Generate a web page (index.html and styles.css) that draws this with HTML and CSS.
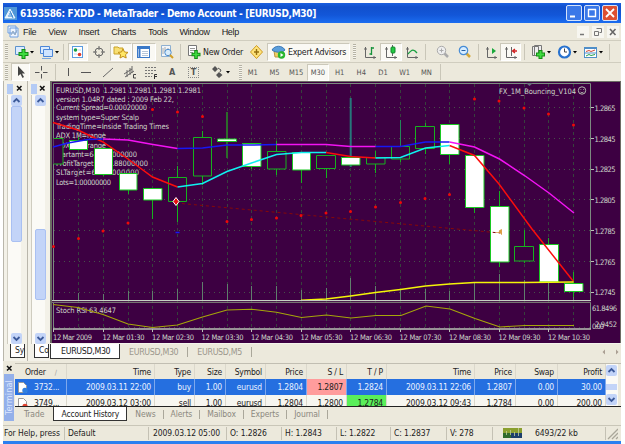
FILE: index.html
```
<!DOCTYPE html>
<html lang="en">
  <head>
    <meta charset="UTF-8">
    <title>MetaTrader</title>
    <link rel="stylesheet" href="styles.css">
  </head>
  <body>
    <div class="window">
      <div class="titlebar">
        <svg class="logo" width="13" height="13" viewBox="0 0 13 13"><rect width="13" height="13" fill="#4f97d8"/><path d="M1 11L6 2l5 9zM3.500 11L8 4" fill="#dff0ff" stroke="#fff" stroke-width=".8"/><path d="M4 9h5M5 7h3M6 4l3 7" stroke="#3b86cf"/></svg>
        <span class="title">6193586: FXDD - MetaTrader - Demo Account - [EURUSD,M30]</span>
        <span class="win_btn"><svg width="14" height="14"><path d="M3 10.500h5" stroke="#fff" stroke-width="2"/></svg></span>
        <span class="win_btn"><svg width="14" height="14"><path d="M3 3.500h8M3.500 3v7.500h7V3" fill="none" stroke="#fff" stroke-width="1.400"/></svg></span>
        <span class="win_btn close"><svg width="14" height="14"><path d="M3 3l8 8M11 3l-8 8" stroke="#fff" stroke-width="1.800"/></svg></span>
      </div>

      <div class="menubar">
        <svg width="13" height="13" viewBox="0 0 13 13"><path d="M1 1h8v7H1zM3 3h8v9H3z" fill="#eef5ff" stroke="#6f9fe0"/><path d="M4 10l2-4 2 4 2-5" fill="none" stroke="#90a8c0"/></svg>
        <span>File</span><span>View</span><span>Insert</span><span>Charts</span><span>Tools</span><span>Window</span><span>Help</span>
        <div class="mdi">
          <svg width="12" height="12"><path d="M3 8.500h4" stroke="#777" stroke-width="1.500"/></svg>
          <svg width="12" height="12"><path d="M4.500 2.500h5v4h-2M2.500 5.500h4v4h-4z" fill="none" stroke="#777"/></svg>
          <svg width="12" height="12"><path d="M3 3l5.500 6M8.500 3L3 9" stroke="#666" stroke-width="1.600"/></svg>
        </div>
      </div>

      <div class="toolbar main_tools">
        <i class="grip"></i>
        <span class="tool"><svg width="21" height="16"><path d="M1.500 2.500h9v8h-9z" fill="#dcecff" stroke="#5c92cc"/><path d="M9.500 5v10M4.500 10h10" stroke="#148c14" stroke-width="4"/><path d="M9.500 6v8M5.500 10h8" stroke="#3fdc3f" stroke-width="2"/><path d="M16 7h4l-2 2.500z"/></svg></span>
        <span class="tool"><svg width="21" height="16"><path d="M1.500 2.500h9v7h-9z" fill="#dcecff" stroke="#4d87d8"/><path d="M4.500 5.500h9v7h-9z" fill="#cfe4ff" stroke="#4d87d8"/><path d="M3 14.500h9" stroke="#7ba6dc"/><path d="M16 7h4l-2 2.500z"/></svg></span>
        <i class="sep"></i>
        <span class="tool on"><svg width="14" height="16"><rect x="1.500" y="2.500" width="10" height="11" fill="#fff" stroke="#5a9be0"/><circle cx="4.500" cy="6" r="1.800" fill="#18a040"/><circle cx="8.500" cy="10.500" r="1.800" fill="#e03828"/><path d="M7 6h3M3 10h3" stroke="#b8d4f0"/></svg></span>
        <span class="tool"><svg width="14" height="16"><circle cx="7" cy="8" r="4" fill="none" stroke="#666"/><path d="M7 2v4M7 10v4M1 8h4M9 8h4" stroke="#666"/></svg></span>
        <span class="tool on"><svg width="16" height="16"><path d="M1 3h4l1 1h4v6H1z" fill="#f8df72" stroke="#c9a227"/><path d="M10 5l1.500 3 3.500.4-2.500 2.300.7 3.300-3.200-1.600L7 14l.6-3.300L5 8.400 8.500 8z" fill="#ffe766" stroke="#c28f16"/></svg></span>
        <span class="tool on"><svg width="16" height="16"><rect x="1.500" y="2.500" width="12" height="11" fill="#fff" stroke="#3a79c8"/><path d="M2 4h12M3.500 4v9" stroke="#3a79c8" stroke-width="2"/><path d="M6 7.500h6M6 9.500h6M6 11.500h6" stroke="#b5c5d8"/></svg></span>
        <span class="tool"><svg width="16" height="16"><path d="M2.500 1.500h9v11h-9z" fill="#f2f6fa" stroke="#8fb0d0"/><path d="M4 4v6M6 3v5M9 4v4" stroke="#aaa"/><circle cx="9" cy="8.500" r="3.200" fill="#d8ecfa" stroke="#4c8cd0"/><path d="M11 11l3 3" stroke="#d2a028" stroke-width="2"/></svg></span>
        <i class="sep"></i>
        <span class="tool wide"><svg width="15" height="16"><path d="M1.500 1.500h8v10h-8z" fill="#fff" stroke="#777"/><path d="M3 4.500h5M3 6.500h5M3 8.500h3" stroke="#999"/><path d="M9 6v9M4.500 10.500h9" stroke="#148c14" stroke-width="3.600"/><path d="M9 7v7M5.500 10.500h7" stroke="#3fdc3f" stroke-width="1.600"/></svg><b>New Order</b></span>
        <span class="tool"><svg width="15" height="16"><path d="M7.500 1.500l6 6.500-6 6.500L1.500 8z" fill="#ffe47c" stroke="#cf9b20"/><path d="M7.500 5v6M5 8h5" stroke="#96700f" stroke-width="1.400"/></svg></span>
        <span class="tool on wide"><svg width="16" height="16"><path d="M3 7h9l-1 6H4z" fill="#f0cf63" stroke="#b9953d"/><path d="M1 6c3-5 10-5 13 0-3 3-9 3-13 0z" fill="#5b9edb" stroke="#3a78b6"/><circle cx="10.500" cy="11" r="3.700" fill="#29b62d"/><path d="M9.500 9v4l3-2z" fill="#fff"/></svg><b>Expert Advisors</b></span>
        <i class="grip"></i>
        <span class="tool"><svg width="16" height="16"><path d="M3.500 3v10.500H14M2 5h3M12 12v3" fill="none" stroke="#666"/><path d="M9.500 3v8M9.500 4h2.500M7.500 10h2" stroke="#18933c" stroke-width="1.300"/></svg></span>
        <span class="tool on"><svg width="16" height="16"><path d="M3.500 3v10.500H14M2 5h3M12 12v3M9.500 1v11" fill="none" stroke="#666"/><rect x="8" y="3" width="4" height="6" rx="1" fill="#23c943" stroke="#11862a"/></svg></span>
        <span class="tool"><svg width="16" height="16"><path d="M3.500 3v10.500H14M2 5h3M12 12v3" fill="none" stroke="#666"/><path d="M4 10c4-5 6-5 9-1" fill="none" stroke="#18a040" stroke-width="1.300"/></svg></span>
        <i class="sep"></i>
        <span class="tool"><svg width="16" height="16"><path d="M9 9l4 4" stroke="#aaa" stroke-width="2.500"/><circle cx="6.500" cy="6.500" r="4.200" fill="#eee" stroke="#aaa"/><path d="M4.500 6.500h4M6.500 4.500v4" stroke="#aaa"/></svg></span>
        <span class="tool"><svg width="16" height="16"><path d="M9 9l4 4" stroke="#d5a837" stroke-width="2.500"/><circle cx="6.500" cy="6.500" r="4.200" fill="#d7edff" stroke="#478cd5" stroke-width="1.200"/><path d="M4.500 6.500h4" stroke="#2862a4"/></svg></span>
        <i class="sep"></i>
        <span class="tool"><svg width="16" height="16"><path d="M4.500 3v10.500H14M3 5h3M12 12v3" fill="none" stroke="#666"/><path d="M9 4v6l4-3z" fill="#18a83a"/></svg></span>
        <span class="tool on"><svg width="16" height="16"><path d="M3.500 3v10.500H14M2 5h3M12 12v3M8.500 3v9" fill="none" stroke="#666"/><path d="M14 7h-4M12 5l-2.500 2 2.500 2" fill="none" stroke="#d02020" stroke-width="1.300"/></svg></span>
        <i class="sep"></i>
        <span class="tool"><svg width="21" height="16"><path d="M1.500 2.500h6v9h-6zM3.500 1.500h7v10h-7z" fill="#eee" stroke="#777"/><path d="M9.500 6v9M5 10.500h9" stroke="#148c14" stroke-width="4"/><path d="M9.500 7v7M6 10.500h7" stroke="#3fdc3f" stroke-width="2"/><path d="M16 7h4l-2 2.500z"/></svg></span>
        <span class="tool"><svg width="21" height="16"><circle cx="7.500" cy="8" r="5.500" fill="#fff" stroke="#2872cf" stroke-width="2.200"/><path d="M7.500 4.500V8H10" fill="none" stroke="#444"/><path d="M16 7h4l-2 2.500z"/></svg></span>
        <span class="tool"><svg width="21" height="16"><rect x="1.500" y="3.500" width="12" height="10" fill="#fff" stroke="#508fc8"/><path d="M1 4.500h13M1 9h13" stroke="#508fc8"/><path d="M3 7.500l3-1 2 1 4-1.500" fill="none" stroke="#d14a38"/><path d="M3 12l3-1.500 2 1 4-1" fill="none" stroke="#24a04a"/><path d="M16 7h4l-2 2.500z"/></svg></span>
        <i class="sep"></i>
      </div>

      <div class="toolbar line_tools">
        <i class="grip"></i>
        <span class="tool on"><svg width="14" height="14"><path d="M4 1v10l2.500-2 2 4 1.500-1-2-3.500h3z" fill="#444"/></svg></span>
        <span class="tool"><svg width="14" height="14"><path d="M7.500 1v4.500M7.500 9v4.500M1 7.500h4.500M9 7.500h4.500" stroke="#555"/></svg></span>
        <i class="sep"></i>
        <span class="tool"><svg width="14" height="14"><path d="M7.500 3v8" stroke="#555"/></svg></span>
        <span class="tool"><svg width="14" height="14"><path d="M2 7.500h10" stroke="#555"/></svg></span>
        <span class="tool"><svg width="14" height="14"><path d="M2 12L12 3" stroke="#666"/></svg></span>
        <span class="tool"><svg width="14" height="14"><path d="M1 9l8-5M2 12l9-6M4 12V5M7 10V3M9 8V1" stroke="#666"/><path d="M13 9.500h-2.500v3.500H13" fill="none" stroke="#444"/></svg></span>
        <span class="tool"><svg width="14" height="14"><path d="M1 2.500h11M1 5.500h11M1 8.500h8M1 11.500h7" stroke="#777" stroke-dasharray="2 1"/><path d="M10.500 14V9.500H13M10.500 11.500H13" fill="none" stroke="#333"/></svg></span>
        <span class="tool letter">A</span>
        <span class="tool letter"><em>T</em></span>
        <span class="tool"><svg width="20" height="14"><path d="M4 1l3 3-3 3-3-3zM8 7l3.500 3L8 13 5 10z" fill="#555"/><path d="M7 3l3 2-1 2" fill="none" stroke="#555"/><path d="M15 6h4l-2 2.500z"/></svg></span>
        <i class="grip"></i>
        <div class="periods">
          <span>M1</span><span>M5</span><span>M15</span><span class="on">M30</span><span>H1</span><span>H4</span><span>D1</span><span>W1</span><span>MN</span>
        </div>
        <i class="sep"></i>
      </div>

      <div class="work">
        <div class="panel">
          <div class="panel_head"><i></i><svg width="7" height="7"><path d="M1 1l4.500 4.500M5.500 1L1 5.500" stroke="#111" stroke-width="1.500"/></svg></div>
          <div class="scroll">
            <span class="arrow"><svg width="11" height="11"><path d="M2.500 7l3-3 3 3" fill="none" stroke="#3c5a9a" stroke-width="1.800"/></svg></span>
            <span class="thumb tall"></span>
            <span class="arrow down"><svg width="11" height="11"><path d="M2.500 4l3 3 3-3" fill="none" stroke="#3c5a9a" stroke-width="1.800"/></svg></span>
          </div>
          <div class="panel_tab">Sy</div>
        </div>
        <div class="panel">
          <div class="panel_head"><i></i><svg width="7" height="7"><path d="M1 1l4.500 4.500M5.500 1L1 5.500" stroke="#111" stroke-width="1.500"/></svg></div>
          <div class="scroll">
            <span class="arrow"><svg width="11" height="11"><path d="M2.500 7l3-3 3 3" fill="none" stroke="#3c5a9a" stroke-width="1.800"/></svg></span>
            <span class="thumb low"></span>
            <span class="arrow down"><svg width="11" height="11"><path d="M2.500 4l3 3 3-3" fill="none" stroke="#3c5a9a" stroke-width="1.800"/></svg></span>
          </div>
          <div class="panel_tab">Co</div>
        </div>

        <div class="chart_area">
          <svg class="chart" width="571" height="263" viewBox="50 81 571 263">
            <rect x="50" y="81" width="571" height="263" fill="#f4f3ec"/>
            <rect x="50" y="81" width="571" height="262" fill="#6c6c64"/>
            <rect x="52" y="82" width="568" height="261" fill="#3d0042"/>
            <!-- grid -->
            <path class="grid_v" d="M78.500 84V329M103.500 84V329M128.500 84V329M152.500 84V329M177.500 84V329M202.500 84V329M227.500 84V329M251.500 84V329M276.500 84V329M301.500 84V329M326.500 84V329M350.500 84V329M375.500 84V329M400.500 84V329M425.500 84V329M449.500 84V329M474.500 84V329M499.500 84V329M524.500 84V329M548.500 84V329M573.500 84V329"/>
            <path class="grid_h" d="M54 107.500H590M54 138.500H590M54 169.500H590M54 199.500H590M54 230.500H590M54 261.500H590M54 292.500H590M54 327.500H590"/>
            <path class="frame" d="M53.500 301V83.500H590.500V301M53.500 303V329M590.500 303V329"/>
            <g class="label">
              <text x="56" y="93.200" textLength="145">EURUSD,M30&#160; 1.2981 1.2981 1.2981 1.2981</text>
              <text x="56" y="101.500" textLength="118">version 1.04R7 dated : 2009 Feb 22,</text>
              <text x="56" y="110.300" textLength="91">Current Spread=0.00020000</text>
              <text x="56" y="119.500" textLength="83">system type=Super Scalp</text>
              <text x="56" y="128.800" textLength="113">TradingTime=Inside Trading Times</text>
              <text x="56" y="138.200" textLength="50">ADX 1M=range</text>
              <text x="56" y="147.500" textLength="50">ADX 1M=range</text>
              <text x="56" y="156.700" textLength="81">startamt=6400.0000000</text>
              <text x="56" y="166" textLength="92">ProfitTarget=640.88000000</text>
              <text x="56" y="175.300" textLength="83">SLTarget=640.0000000</text>
              <text x="56" y="184.500" textLength="55">Lots=1.00000000</text>
              <text x="499" y="93.500" textLength="77">FX_1M_Bouncing_V104</text>
              <text x="56" y="312.500" textLength="60">Stoch RSI 63.4647</text>
            </g>
            <circle cx="582" cy="90.500" r="3.700" fill="none" stroke="#b5beb0"/>
            <path d="M580.500 89.500h.8M583 89.500h.8M580.500 92q1.500 1.500 3 0" fill="none" stroke="#b5beb0" stroke-width=".8"/>
            <path d="M526 83h7l-3.500 3z" fill="#68707a"/>
            <!-- volumes -->
            <path class="volume" d="M78.500 301v-8M103.500 301v-7M128.500 301v-10M152.500 301v-10M177.500 301v-12M202.500 301v-19M227.500 301v-17M251.500 301v-15M276.500 301v-15M301.500 301v-11M326.500 301v-13M350.500 301v-23M375.500 301v-15M400.500 301v-12M425.500 301v-12M449.500 301v-10M474.500 301v-19M499.500 301v-27M524.500 301v-21M548.500 301v-19M573.500 301v-29"/>
            <!-- candles -->
            <path class="wick" d="M78.500 137v13M103.500 148v28M128.500 173v21M152.500 188v31M177.500 166v11M177.500 202v20M202.500 131v6M202.500 176v9M251.500 143v26M276.500 141v10M276.500 169v6M301.500 152v31M326.500 169v9M375.500 151v6M375.500 164v9M400.500 159v3M425.500 123v3M425.500 149v5M449.500 155v9M474.500 208v5M499.500 191v15M499.500 262v5M524.500 230v16M524.500 261v2M548.500 238v6M573.500 272v11M573.500 291v6"/>
            <path d="M227 112v46" stroke="#2d6c2b" stroke-width="2"/>
            <path d="M350.700 98v69" stroke="#26777a" stroke-width="2"/>
            <path d="M400.500 120v26" stroke="#228658"/>
            <path class="hollow" d="M53.500 138.500h9.500v25.500h-9.500M168.500 177.500h18v24h-18zM193.500 137.500h18v38.500h-18zM267.500 151.500h18.500v17.500h-18.500zM316.500 155.500h19v13h-19zM366.500 157.500h18.500v6.500h-18.500zM391.500 146.500h18v12.500h-18zM415.500 126.500h19v22h-19zM514.500 246.500h19v14.500h-19z"/>
            <path class="full" d="M69.500 140.500h18v9h-18zM94.500 148.500h18v26h-18zM119.500 173.500h17.500v16.500h-17.500zM143.500 188.500h18.500v11.500h-18.500zM217.500 139h19v2.500h-19zM242.500 143.500h18.500v23h-18.500zM292.500 152.500h18v17.500h-18zM341.500 157.500h18.500v7.500h-18.500zM440.500 124.500h18.500v30h-18.500zM465.500 155.500h18.500v52h-18.500zM490.500 206.500h18.500v55.500h-18.500zM539.500 244.500h19v37.500h-19zM564.500 283.500h18.500v8h-18.500z"/>
            <!-- moving averages -->
            <g class="ma">
              <path d="M53 122.500L78 130l25 12 25 17 24.500 18 25 10M326 152.500l24.500 4 25 1.500M449.500 145.500l25 10L499 184l33 45 41.500 52.500" stroke="#fb0d0d"/>
              <path d="M177.500 187l25-3.500 24.500-12 24.500-8.500 25-8.500 25-2 24.500 0M375.500 158l25-.5 25-9.500 24-2.500" stroke="#0ff0f0" stroke-width="1.900"/>
              <path d="M53 147l15-4 20-3.500 15-.5M177.500 148.500l25-.5 24.500-3 24.500 0 25-.5M375.500 146.500h25l25-4.500h24" stroke="#1717f5"/>
              <path d="M103 139l25 1 25 4.500 24.500 4M276.500 144.500h49.500l24.500 2h25M449.500 142l25 5 25 12 25 16.500 24.500 17.500 25 20" stroke="#f313f3"/>
              <path d="M301 300.300l25-1.300 24.500-3 25-3.500 25-3 25-3.500 24-2 25-1.500H524l49.500-.5" stroke="#f4f408" stroke-width="1.800"/>
            </g>
            <path d="M176 203L500 233" stroke="#860808" stroke-dasharray="3 3"/>
            <path d="M173 201.500l3-4 3 4-3 4z" fill="#e81010" stroke="#fff"/>
            <path d="M496 232.500h4M499 231l2.500-1.500v5z" fill="#dfa038" stroke="#d58b2b" stroke-width=".7"/>
            <path d="M175.500 232.500h4" stroke="#1717f5" stroke-width="1.500"/>
            <path class="sar" d="M53.500 246.500h0M78.500 238.500h0M103 231h0M128 223h0M152.500 109.500h0M177.500 112h0M202.500 116.500h0M227 221.500h0M251.500 219.500h0M276.500 218h0M301 215.500h0M326 213h0M350.500 211.500h0M375.500 207h0M400.500 202.500h0M425 198.500h0M449.500 194.500h0M474.500 99h0M499 101h0M524 108h0M548.500 114h0M573.500 125h0"/>
            <path d="M52 300.500H591" stroke="#c7cfc4"/>
            <path d="M52 302.300H591" stroke="#85907f"/>
            <path d="M53 329H591" stroke="#b9c1b6" stroke-width="1.500"/>
            <path d="M53 304.500l25 3 25 7 25 9.500 24.500 3.500 25-2.500 25-8 24.500-7 24.500-.8 25 3 25 5.300 25-2.500 24.500 3 25-2.500h25l25-9.500 24 3 25 9.500 25 8.500 25-1.500h49" fill="none" stroke="#a6a60a" stroke-width="1.100"/>
            <!-- scales -->
            <path d="M591 107.500h3M591 138.500h3M591 169.500h3M591 199.500h3M591 230.500h3M591 261.500h3M591 292.500h3M53.500 329v3M103.500 329v3M152.500 329v3M202.500 329v3M251.500 329v3M301.500 329v3M350.500 329v3M400.500 329v3M449.500 329v3M499.500 329v3M548.500 329v3" stroke="#b9c1b6"/>
            <g class="label">
              <text x="594.500" y="110.500" textLength="21">1.2865</text>
              <text x="594.500" y="141.500" textLength="21">1.2845</text>
              <text x="594.500" y="172.300" textLength="21">1.2825</text>
              <text x="594.500" y="202.800" textLength="21">1.2805</text>
              <text x="594.500" y="233.500" textLength="21">1.2785</text>
              <text x="594.500" y="264.500" textLength="21">1.2765</text>
              <text x="594.500" y="295.300" textLength="21">1.2745</text>
              <text x="592" y="310.500" textLength="25">61.8496</text>
              <text x="592" y="329" textLength="12">0.00</text>
              <text x="595" y="327" textLength="22">2.9452</text>
              <text x="53" y="339.500" textLength="39">12 Mar 2009</text>
              <text x="102.500" y="339.500" textLength="42">12 Mar 01:30</text>
              <text x="152" y="339.500" textLength="42">12 Mar 02:30</text>
              <text x="201.500" y="339.500" textLength="42">12 Mar 03:30</text>
              <text x="251" y="339.500" textLength="42">12 Mar 04:30</text>
              <text x="300.500" y="339.500" textLength="42">12 Mar 05:30</text>
              <text x="350" y="339.500" textLength="42">12 Mar 06:30</text>
              <text x="399.500" y="339.500" textLength="42">12 Mar 07:30</text>
              <text x="449" y="339.500" textLength="42">12 Mar 08:30</text>
              <text x="498.500" y="339.500" textLength="42">12 Mar 09:30</text>
              <text x="548" y="339.500" textLength="42">12 Mar 10:30</text>
            </g>
          </svg>
          <div class="chart_tabs">
            <span class="active">EURUSD,M30</span><span>EURUSD,M30</span><span>EURUSD,M5</span>
            <svg width="22" height="8"><path d="M6 1.500v5L3.500 4zM17 1.500v5L19.500 4z" fill="#aa9f93"/></svg>
          </div>
        </div>
      </div>

      <div class="terminal">
        <div class="terminal_side">
          <svg width="7" height="7"><path d="M1 1l4.500 4.500M5.500 1L1 5.500" stroke="#111" stroke-width="1.500"/></svg>
          <span>Terminal</span>
        </div>
        <div class="terminal_body">
          <div class="list">
            <div class="rows">
              <div class="row head"><span>Order <small>∕</small></span><span>Time</span><span>Type</span><span>Size</span><span>Symbol</span><span>Price</span><span>S / L</span><span>T / P</span><span>Time</span><span>Price</span><span>Swap</span><span>Profit</span></div>
              <div class="row selected"><span><svg width="13" height="13"><path d="M2.500 1.500h5l3 3v7h-8z" fill="#fff" stroke="#999"/><circle cx="9" cy="9.500" r="2.700" fill="#2f7fe0"/></svg>3732...</span><span>2009.03.11 22:00</span><span>buy</span><span>1.00</span><span>eurusd</span><span>1.2804</span><span class="sl">1.2807</span><span>1.2824</span><span>2009.03.11 22:06</span><span>1.2807</span><span>0.00</span><span>30.00</span></div>
              <div class="row"><span><svg width="13" height="13"><path d="M2.500 1.500h5l3 3v7h-8z" fill="#fff" stroke="#999"/><circle cx="9" cy="9.500" r="2.700" fill="#e0432f"/></svg>3749...</span><span>2009.03.12 03:00</span><span>sell</span><span>1.00</span><span>eurusd</span><span>1.2804</span><span>1.2800</span><span class="tp">1.2784</span><span>2009.03.12 09:43</span><span>1.2784</span><span>0.00</span><span>200.00</span></div>
            </div>
            <div class="list_scroll">
              <span class="arrow"><svg width="11" height="11"><path d="M2.500 7l3-3 3 3" fill="none" stroke="#3c5a9a" stroke-width="1.800"/></svg></span>
              <span class="nub"></span>
              <span class="arrow down"><svg width="11" height="11"><path d="M2.500 4l3 3 3-3" fill="none" stroke="#3c5a9a" stroke-width="1.800"/></svg></span>
            </div>
          </div>
          <div class="terminal_tabs">
            <span>Trade</span><span class="active">Account History</span><span>News</span><span>Alerts</span><span>Mailbox</span><span>Experts</span><span>Journal</span>
          </div>
        </div>
      </div>

      <div class="statusbar">
        <span>For Help, press</span><span>Default</span><span class="date">2009.03.12 05:00</span><span>O: 1.2826</span><span>H: 1.2843</span><span>L: 1.2822</span><span>C: 1.2837</span><span>V: 278</span>
        <span class="traffic"><svg width="19" height="11"><path d="M0 0h19v5H0z" fill="#8a9f2e"/><path d="M0 5h8v5H0z" fill="#2f6a2c"/><path d="M8 5h11v5H8z" fill="#1d3f6c"/><path d="M3.500 3v4M7.500 2v5M11.500 4v4M15.500 0v8" stroke="#c3cf9c" stroke-width=".8"/></svg></span>
        <span class="kb">6493/22 kb</span>
        <svg class="resize" width="12" height="13"><path d="M2 12L12 2M6 12l6-6M10 12l2-2" stroke="#aaa79a" stroke-width="1.300"/></svg>
      </div>
      <div class="taskbar"></div>
    </div>
  </body>
</html>
```
FILE: styles.css
```
* {
  box-sizing: border-box;
}

body {
  margin: 0;
  background: #fff;
  overflow: hidden;
}

.window {
  width: 618px;
  height: 441px;
  margin: 3px 0 0 3px;
  background: #ece9dc;
  color: #1c1c1c;
  font-family: "DejaVu Sans Condensed", "DejaVu Sans", sans-serif;
  font-stretch: condensed;
  font-size: 8.5px;
  letter-spacing: -0.2px;
  white-space: nowrap;
}

svg {
  display: block;
  flex: none;
}

/* title */
.titlebar {
  display: flex;
  align-items: center;
  height: 20px;
  padding: 0 3px 0 1px;
  gap: 2px;
  background: linear-gradient(#1a5fe0, #1150cd 20%, #1256d8 60%, #1b6df0);
}

.title {
  flex: 1;
  margin-left: 1px;
  color: #fff;
  font-weight: bold;
  font-size: 10px;
  letter-spacing: -0.33px;
}

.win_btn {
  width: 16px;
  height: 16px;
  border: 1px solid #d5e3fb;
  border-radius: 2px;
  background: #3a78e8;
}

.win_btn.close {
  background: #dd5032;
}

/* menu */
.menubar {
  display: flex;
  align-items: center;
  height: 17px;
  padding-left: 4px;
  font-family: "Liberation Sans", sans-serif;
  font-size: 9px;
  letter-spacing: -0.3px;
}

.menubar span {
  margin-right: 12px;
}

.menubar svg + span {
  margin-left: 3px;
}

.mdi {
  display: flex;
  gap: 3px;
  margin: 0 2px 0 auto;
}

.mdi svg {
  background: #f7f6f0;
}

/* toolbars */
.toolbar {
  display: grid;
  align-items: center;
  border-top: 1px solid #d0cdbf;
}

.main_tools {
  height: 22px;
  grid-template-columns: 8px 27px 22px 8px 20px 22px 22px 24px 21px 9px 58px 21px 84px 9px 20px 22px 20px 9px 23px 21px 7px 18px 21px 7px 26px 26px 26px 4px;
  justify-content: start;
}

.line_tools {
  height: 19px;
  grid-template-columns: 8px 19px 22px 9px 14px 22px 22px 21px 21px 22px 21px 33px 5px 195px 5px;
  justify-content: start;
}

.tool {
  display: flex;
  align-items: center;
  justify-content: center;
  height: 18px;
}

.main_tools > :nth-child(12) {
  margin-left: 3px;
}

.main_tools > :nth-child(13) {
  margin-left: 2px;
  margin-right: -1px;
}

.main_tools > :nth-child(n + 14) {
  transform: translateX(2px);
}

.tool.on,
.periods .on {
  background: #faf9f4;
  border: 1px solid #cbc8ba;
  border-right-color: #fff;
  border-bottom-color: #fff;
}

.wide b {
  margin-left: 1px;
  font-weight: normal;
}

.main_tools .wide b {
  font-size: 8.800px;
  letter-spacing: -0.25px;
}

.letter {
  color: #555;
  font-weight: bold;
  font-size: 9px;
}

.letter em {
  width: 11px;
  height: 11px;
  border: 1px dotted #888;
  font-style: normal;
  line-height: 9px;
  text-align: center;
}

.grip {
  width: 3px;
  height: 15px;
  margin-left: 2px;
  background: repeating-linear-gradient(#b5b2a4 0 1px, #f6f5ee 1px 2px);
}

.sep {
  width: 1px;
  height: 16px;
  margin-left: 3px;
  background: #c9c6b8;
}

.periods {
  display: grid;
  grid-template-columns: repeat(9, 21.700px);
  color: #555;
  font-size: 7.500px;
  letter-spacing: 0;
}

.periods span {
  display: flex;
  align-items: center;
  justify-content: center;
  height: 17px;
}

/* side panels and chart */
.work {
  display: flex;
  height: 280px;
}

.panel {
  display: flex;
  flex-direction: column;
  width: 24px;
  padding: 1px 1px 3px 3px;
  border-left: 1px solid #b9b6ab;
  background: #f3f1e8;
}

.panel + .panel {
  width: 23px;
}

.panel_head {
  display: flex;
  align-items: center;
  justify-content: space-between;
  height: 13px;
  padding-right: 3px;
}

.panel_head i {
  width: 6px;
  height: 10px;
  background: #b4cbf5;
}

.scroll {
  display: flex;
  flex-direction: column;
  flex: 1;
  width: 14px;
  padding-left: 3px;
  border-left: 1px solid #cfccc0;
  background: #fbfaf6;
}

.arrow {
  display: block;
  width: 11px;
  height: 11px;
  border-radius: 2px;
  background: #c3d4f8;
}

.arrow.down {
  margin-top: auto;
}

.thumb {
  width: 11px;
  border: 1px solid #a9c0f2;
  border-radius: 2px;
  background: #c3d4f8;
}

.thumb.tall {
  height: 136px;
}

.thumb.low {
  height: 71px;
  margin-top: 123px;
}

.panel_tab {
  width: 15px;
  height: 14px;
  margin-left: 3px;
  padding-left: 4px;
  overflow: hidden;
  border: 1px solid #333;
  border-top: 0;
  background: #fff;
  line-height: 13px;
}

.chart_area {
  flex: none;
  width: 571px;
}

.grid_v,
.grid_h {
  stroke: #37413d;
  stroke-dasharray: 3 3;
}

.grid_h {
  stroke: #46504a;
  stroke-dasharray: 1 4;
}

.frame {
  fill: none;
  stroke: #7c8a80;
}

.volume {
  stroke: #5f7f6c;
}

.wick {
  stroke: #16b21e;
}

.hollow {
  fill: #3d0042;
  stroke: #16b21e;
}

.full {
  fill: #fff;
  stroke: #18c821;
}

.ma path {
  fill: none;
  stroke-width: 1.500;
}

.sar {
  stroke: #f00808;
  stroke-width: 3;
  stroke-linecap: round;
}

.label {
  fill: #cdd6ca;
  font-size: 7.500px;
  letter-spacing: 0;
}

.chart_tabs {
  display: flex;
  align-items: center;
  height: 16px;
  color: #9b978c;
}

.chart_tabs span {
  padding: 0 9px;
  line-height: 10px;
  letter-spacing: -0.33px;
  font-size: 8.800px;
}

.chart_tabs .active {
  width: 70px;
  height: 15px;
  padding-left: 10px;
  margin-top: -1px;
  border: 1px solid #333;
  border-top: 0;
  background: #fff;
  color: #222;
  line-height: 14px;
}

.chart_tabs span:not(.active) {
  border-right: 1px solid #aaa79a;
}

.chart_tabs svg {
  margin-left: auto;
}

/* terminal */
.terminal {
  display: flex;
  height: 61px;
  padding-top: 2px;
}

.terminal_side {
  width: 12px;
  padding: 2px 0 0 1px;
}

.terminal_side svg {
  margin: 0 0 2px 2px;
}

.terminal_side span {
  display: block;
  width: 10px;
  height: 47px;
  background: #94b0ea;
  color: #dce7ff;
  font-size: 9px;
  line-height: 10px;
  text-align: center;
  letter-spacing: 0.1px;
  writing-mode: vertical-rl;
  transform: rotate(180deg);
}

.terminal_body {
  flex: 1;
}

.list {
  display: flex;
  height: 44px;
  overflow: hidden;
  border-top: 1px solid #c1beb2;
  border-bottom: 1px solid #222;
}

.rows {
  width: 591px;
}

.row {
  display: grid;
  grid-template-columns: 52px 88px 40px 31px 40px 41px 40px 40px 88px 41px 42px 48px;
  height: 16px;
  background: #f7f6f0;
  line-height: 16px;
  text-align: right;
}

.row.head {
  height: 15px;
  background: #ece9dc;
  line-height: 17px;
}

.row span {
  padding-right: 3px;
  border-right: 1px solid #dbd8cc;
}

.row span:first-child {
  display: flex;
  align-items: center;
  padding-left: 1px;
  gap: 5px;
  text-align: left;
}

.row.head span:first-child {
  gap: 9px;
  padding-left: 10px;
}

.row small {
  color: #999;
}

.row.selected {
  background: #256fe0;
  color: #e9f1ff;
}

.row.selected span {
  border-right-color: #7ea8ec;
}

.row .sl {
  background: #ff9c9c;
  color: #222;
}

.row .tp {
  background: #5aef5a;
}

.list_scroll {
  display: flex;
  flex-direction: column;
  width: 12px;
  padding: 1px 0;
  background: #fbfaf6;
}

.nub {
  height: 6px;
  width: 11px;
  margin-top: 8px;
  background: #c3d4f8;
}

.terminal_tabs {
  display: flex;
  height: 14px;
  padding-left: 9px;
  color: #8b887e;
  line-height: 14px;
}

.terminal_tabs span {
  position: relative;
  margin-right: 15px;
  letter-spacing: -0.1px;
}

.terminal_tabs span:first-child {
  margin-right: 9px;
}

.terminal_tabs .active {
  width: 74px;
  margin-right: 8px;
  border: 1px solid #333;
  border-top: 0;
  background: #fff;
  color: #1c1c1c;
  text-align: center;
  letter-spacing: -0.2px;
}

.terminal_tabs .active ~ span::after {
  content: "";
  position: absolute;
  top: 3px;
  right: -8px;
  width: 1px;
  height: 9px;
  background: #aaa79a;
}

/* status */
.statusbar {
  display: grid;
  grid-template-columns: 62px 84px 78px 55px 55px 54px 56px 46px 37px 76px 15px;
  align-items: center;
  height: 16px;
  margin-top: 3px;
  border-top: 1px solid #c9c6b8;
  letter-spacing: -0.08px;
}

.statusbar span {
  height: 13px;
  padding-left: 3px;
  border-right: 1px solid #c4c1b4;
  line-height: 13px;
}

.statusbar span:first-child {
  padding-left: 1px;
}

.statusbar .date {
  padding-left: 4px;
}

.statusbar .traffic {
  padding: 1px 0 0 10px;
  border: 0;
}

.statusbar .kb {
  padding-left: 5px;
}

.taskbar {
  height: 3px;
  background: #2b7ff0;
}
```
